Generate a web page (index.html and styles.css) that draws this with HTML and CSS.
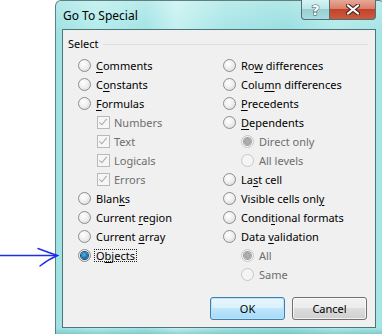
FILE: index.html
```html
<!DOCTYPE html>
<html lang="en">
	<head>
		<meta charset="UTF-8" />
		<title>Go To Special</title>
		<link rel="stylesheet" href="styles.css">
	</head>
	<body>
		<svg class="arrow" width="62" height="26" viewBox="0 0 62 26">
			<path d="M0 11.5 L57 11.5" />
			<path d="M38 4.5 Q47 8 57.5 11.5 Q49 15 40 22" />
		</svg>

		<div class="window">
			<div class="titlebar">
				<span class="title">Go To Special</span>
				<div class="caption-btns">
					<span class="cap help">?</span>
					<span class="cap close">
						<svg width="14" height="11" viewBox="0 0 14 11">
							<path d="M2 1.5 L12 9.5 M12 1.5 L2 9.5" class="x-outline" />
							<path d="M2 1.5 L12 9.5 M12 1.5 L2 9.5" class="x-fill" />
						</svg>
					</span>
				</div>
			</div>

			<div class="client">
				<div class="group-title">Select</div>

				<div class="columns">
					<div class="col">
						<div class="opt"><span class="radio"></span><span><u>C</u>omments</span></div>
						<div class="opt"><span class="radio"></span><span>C<u>o</u>nstants</span></div>
						<div class="opt"><span class="radio"></span><span><u>F</u>ormulas</span></div>
						<div class="opt sub disabled"><span class="check"></span><span>Numbers</span></div>
						<div class="opt sub disabled"><span class="check"></span><span>Text</span></div>
						<div class="opt sub disabled"><span class="check"></span><span>Logicals</span></div>
						<div class="opt sub disabled"><span class="check"></span><span>Errors</span></div>
						<div class="opt"><span class="radio"></span><span>Blan<u>k</u>s</span></div>
						<div class="opt"><span class="radio"></span><span>Current <u>r</u>egion</span></div>
						<div class="opt"><span class="radio"></span><span>Current <u>a</u>rray</span></div>
						<div class="opt"><span class="radio checked"></span><span class="focus">O<u>b</u>jects</span></div>
					</div>
					<div class="col">
						<div class="opt"><span class="radio"></span><span>Ro<u>w</u> differences</span></div>
						<div class="opt"><span class="radio"></span><span>Colu<u>m</u>n differences</span></div>
						<div class="opt"><span class="radio"></span><span><u>P</u>recedents</span></div>
						<div class="opt"><span class="radio"></span><span><u>D</u>ependents</span></div>
						<div class="opt sub disabled"><span class="radio checked"></span><span>Direct only</span></div>
						<div class="opt sub disabled"><span class="radio"></span><span>All levels</span></div>
						<div class="opt"><span class="radio"></span><span>La<u>s</u>t cell</span></div>
						<div class="opt"><span class="radio"></span><span>Visible cells onl<u>y</u></span></div>
						<div class="opt"><span class="radio"></span><span>Condi<u>t</u>ional formats</span></div>
						<div class="opt"><span class="radio"></span><span>Data <u>v</u>alidation</span></div>
						<div class="opt sub disabled"><span class="radio checked"></span><span>All</span></div>
						<div class="opt sub disabled"><span class="radio"></span><span>Same</span></div>
					</div>
				</div>

				<div class="buttons">
					<button class="btn default">OK</button>
					<button class="btn">Cancel</button>
				</div>
			</div>
		</div>
	</body>
</html>
```

FILE: styles.css
```css
* {
	box-sizing: border-box;
	margin: 0;
	padding: 0;
}

body {
	background-color: #ffffff;
	width: 382px;
	height: 334px;
	overflow: hidden;
	position: relative;
	font-family: "Noto Sans", "Open Sans", sans-serif;
}

/* hand drawn annotation */
.arrow {
	position: absolute;
	left: 0;
	top: 244px;
}

.arrow path {
	fill: none;
	stroke: #1f2ee8;
	stroke-width: 1.4;
	stroke-linecap: round;
}

.window {
	margin-left: 55px;
	width: 330px;
	height: 334px;
	padding: 0 8px 6px 6px;
	border: 1px solid #5f7f80;
	border-bottom: none;
	border-radius: 6px 6px 0 0;
	background:
		linear-gradient(to top, rgba(60, 150, 150, 0.35), rgba(60, 150, 150, 0) 6px),
		linear-gradient(to bottom, rgba(255, 255, 255, 0.25), rgba(255, 255, 255, 0) 30px),
		linear-gradient(to right, #9fe2e3 0, #b4ecec 40px, #a3e4e5 90px, #c4f0f0 120px, #a6e5e6 170px, #99dfe0 230px, #b2eaea 280px, #a4e4e5 330px);
	display: flex;
	flex-direction: column;
}

.titlebar {
	height: 28px;
	display: flex;
	justify-content: space-between;
	align-items: flex-start;
	padding-left: 1px;
}

.title {
	font-size: 12px;
	color: #000;
	margin-top: 7px;
	line-height: 16px;
}

.caption-btns {
	display: flex;
	margin-top: -1px;
}

.cap {
	height: 20px;
	display: flex;
	align-items: center;
	justify-content: center;
	border: 1px solid #4f6f72;
	border-top: none;
}

.help {
	width: 28px;
	border-right: none;
	border-radius: 0 0 0 4px;
	background: linear-gradient(to bottom, #d6f3f3 0, #bce6e7 45%, #98cfd1 50%, #a9dcde 100%);
	font-family: "DejaVu Sans", sans-serif;
	font-weight: bold;
	font-size: 14px;
	color: #ffffff;
	-webkit-text-stroke: 1px #3b4f55;
	paint-order: stroke fill;
}

.close {
	width: 47px;
	border-radius: 0 0 4px 0;
	background: linear-gradient(to bottom, #e8a898 0, #d9806b 45%, #c2432a 50%, #cc5a3e 100%);
}

.x-outline {
	stroke: #4a2a24;
	stroke-width: 4.2;
	stroke-linecap: round;
}

.x-fill {
	stroke: #ffffff;
	stroke-width: 2.2;
	stroke-linecap: round;
}

.client {
	flex: 1;
	background-color: #f0f0f0;
	border: 1px solid #4d7476;
	padding: 7px 7px 0 5px;
	font-size: 11px;
	color: #000;
}

.group-title {
	display: flex;
	align-items: center;
	gap: 4px;
	height: 14px;
	line-height: 14px;
	padding-right: 0;
}

.group-title::after {
	content: "";
	flex: 1;
	border-top: 1px solid #d5dfe5;
	margin-top: 1px;
}

.columns {
	display: flex;
	margin-top: 5px;
	padding-left: 10px;
}

.col {
	width: 150px;
}

.opt {
	display: flex;
	align-items: center;
	gap: 5px;
	height: 19px;
	line-height: 19px;
	white-space: nowrap;
}

.opt u {
	text-decoration-thickness: 1px;
	text-underline-offset: 2px;
}

.opt.sub {
	padding-left: 18px;
}

.opt.disabled {
	color: #6d6d6d;
}

.radio {
	width: 13px;
	height: 13px;
	border-radius: 50%;
	border: 1px solid #8c8e90;
	background: radial-gradient(circle at 40% 35%, #ffffff 0, #f0f0f0 45%, #d2d4d6 100%);
	position: relative;
	flex: none;
}

.radio.checked::after {
	content: "";
	position: absolute;
	left: 2px;
	top: 2px;
	width: 7px;
	height: 7px;
	border-radius: 50%;
	background: radial-gradient(circle at 45% 40%, #5fb8e8 0, #1d7fb8 45%, #0b3f66 100%);
	box-shadow: 0 0 0 1px #1a4a6e;
}

.disabled .radio {
	border-color: #c6c7c8;
	background: #f4f4f4;
}

.disabled .radio.checked::after {
	background: radial-gradient(circle, #b4b4b4 0, #9a9a9a 100%);
	box-shadow: 0 0 0 1px #a0a0a0;
}

.check {
	width: 13px;
	height: 13px;
	margin-left: 1px;
	margin-right: -1px;
	border: 1px solid #b9b9b9;
	background: #f6f6f6;
	position: relative;
	flex: none;
}

.check::after {
	content: "";
	position: absolute;
	left: 3px;
	top: 0px;
	width: 3px;
	height: 7px;
	border: solid #a8a8a8;
	border-width: 0 1.5px 1.5px 0;
	transform: rotate(40deg);
}

.focus {
	display: inline-block;
	line-height: 11px;
	border: 1px dotted #222;
	padding: 0 1px;
	margin-left: -2px;
}

.buttons {
	display: flex;
	justify-content: flex-end;
	gap: 7px;
	margin-top: 13px;
	padding-right: 1px;
}

.btn {
	width: 75px;
	height: 23px;
	font-family: inherit;
	font-size: 11px;
	color: #000;
	border: 1px solid #707070;
	border-radius: 3px;
	background: linear-gradient(to bottom, #f2f2f2 0, #ebebeb 50%, #dddddd 50%, #cfcfcf 100%);
	box-shadow: inset 0 0 0 1px rgba(255, 255, 255, 0.7);
}

.btn.default {
	border-color: #3c7fb1;
	background: linear-gradient(to bottom, #eaf6fd 0, #d9f0fc 50%, #bee6fd 50%, #a7d9f5 100%);
	box-shadow: inset 0 0 0 1px #b9e4fa;
}
```
